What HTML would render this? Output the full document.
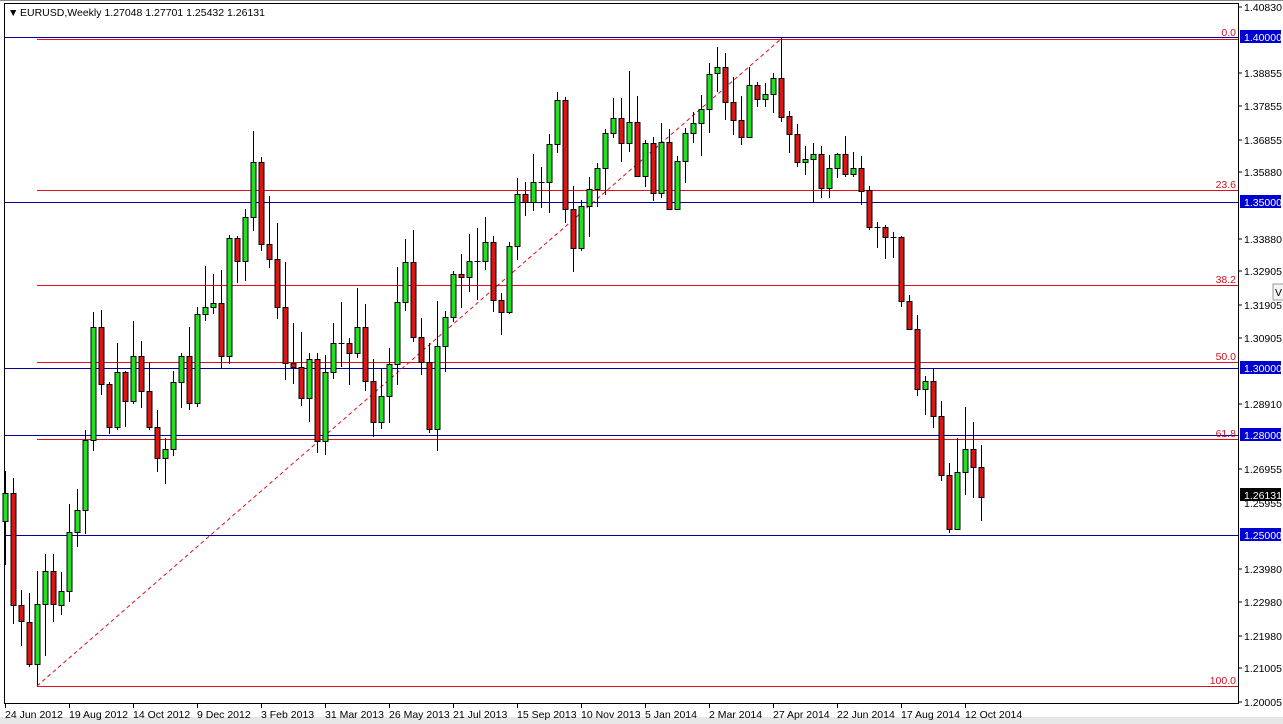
<!DOCTYPE html>
<html><head><meta charset="utf-8"><style>
html,body{margin:0;padding:0;background:#fff;width:1283px;height:724px;overflow:hidden}
svg{display:block}
text{font-family:"Liberation Sans",Tahoma,sans-serif;font-size:10.5px}
</style></head><body>
<svg id="c" width="1283" height="724" viewBox="0 0 1283 724" xmlns="http://www.w3.org/2000/svg" shape-rendering="crispEdges">
<rect x="0" y="0" width="1283" height="724" fill="#fff"/>
<rect x="0" y="717" width="1283" height="7" fill="#e6e6e6"/>
<line x1="0" y1="0.5" x2="1283" y2="0.5" stroke="#888"/>
<line x1="4.5" y1="3" x2="4.5" y2="704" stroke="#000"/>
<line x1="4" y1="3.5" x2="1238" y2="3.5" stroke="#000"/>
<line x1="1238.5" y1="3" x2="1238.5" y2="704" stroke="#000"/>
<line x1="4" y1="703.5" x2="1239" y2="703.5" stroke="#000"/>
<text x="8" y="16" font-size="8">▼</text>
<text x="20" y="16" font-size="11">EURUSD,Weekly  1.27048 1.27701 1.25432 1.26131</text>
<line x1="5" y1="37.5" x2="1238" y2="37.5" stroke="#0000a0"/><line x1="5" y1="202.5" x2="1238" y2="202.5" stroke="#0000a0"/>
<line x1="5" y1="368.5" x2="1238" y2="368.5" stroke="#0000a0"/><line x1="5" y1="435.5" x2="1238" y2="435.5" stroke="#0000a0"/>
<line x1="5" y1="535.5" x2="1238" y2="535.5" stroke="#0000a0"/>
<line x1="37" y1="39.5" x2="1238" y2="39.5" stroke="#e0101a"/><line x1="37" y1="190.5" x2="1238" y2="190.5" stroke="#e0101a"/>
<line x1="37" y1="285.5" x2="1238" y2="285.5" stroke="#e0101a"/><line x1="37" y1="362.5" x2="1238" y2="362.5" stroke="#e0101a"/>
<line x1="37" y1="439.5" x2="1238" y2="439.5" stroke="#e0101a"/><line x1="37" y1="686.5" x2="1238" y2="686.5" stroke="#e0101a"/>
<line x1="37" y1="686" x2="781" y2="39" stroke="#e0101a" stroke-dasharray="4,3" shape-rendering="auto"/>
<g fill="#d01020" text-anchor="end" font-size="9.5">
<text x="1236" y="36">0.0</text><text x="1236" y="188">23.6</text><text x="1236" y="283">38.2</text>
<text x="1236" y="360">50.0</text><text x="1236" y="437">61.8</text><text x="1236" y="684">100.0</text></g>
<g id="candles"></g>
<g stroke="#000"><line x1="1238" y1="7" x2="1242" y2="7"/><line x1="1238" y1="73" x2="1242" y2="73"/><line x1="1238" y1="106" x2="1242" y2="106"/><line x1="1238" y1="140" x2="1242" y2="140"/><line x1="1238" y1="172" x2="1242" y2="172"/><line x1="1238" y1="239" x2="1242" y2="239"/><line x1="1238" y1="271" x2="1242" y2="271"/><line x1="1238" y1="305" x2="1242" y2="305"/><line x1="1238" y1="338" x2="1242" y2="338"/><line x1="1238" y1="404" x2="1242" y2="404"/><line x1="1238" y1="469" x2="1242" y2="469"/><line x1="1238" y1="569" x2="1242" y2="569"/><line x1="1238" y1="602" x2="1242" y2="602"/><line x1="1238" y1="636" x2="1242" y2="636"/><line x1="1238" y1="668" x2="1242" y2="668"/><line x1="1238" y1="702" x2="1242" y2="702"/></g>
<g fill="#000">
<text x="1244" y="11">1.40830</text><text x="1244" y="77">1.38855</text><text x="1244" y="110">1.37855</text>
<text x="1244" y="144">1.36855</text><text x="1244" y="176">1.35880</text><text x="1244" y="243">1.33880</text>
<text x="1244" y="275">1.32905</text><text x="1244" y="309">1.31905</text><text x="1244" y="342">1.30905</text>
<text x="1244" y="408">1.28910</text><text x="1244" y="473">1.26955</text><text x="1244" y="507">1.25955</text>
<text x="1244" y="573">1.23980</text><text x="1244" y="606">1.22980</text><text x="1244" y="640">1.21980</text>
<text x="1244" y="672">1.21005</text><text x="1244" y="706">1.20005</text></g>
<g>
<rect x="1240" y="30" width="41" height="13" fill="#0000d0"/><text x="1244" y="41" fill="#fff">1.40000</text>
<rect x="1240" y="195" width="41" height="13" fill="#0000d0"/><text x="1244" y="206" fill="#fff">1.35000</text>
<rect x="1240" y="361" width="41" height="13" fill="#0000d0"/><text x="1244" y="372" fill="#fff">1.30000</text>
<rect x="1240" y="428" width="41" height="13" fill="#0000d0"/><text x="1244" y="439" fill="#fff">1.28000</text>
<rect x="1240" y="528" width="41" height="13" fill="#0000d0"/><text x="1244" y="539" fill="#fff">1.25000</text>
<rect x="1240" y="488" width="41" height="13" fill="#000"/><text x="1244" y="499" fill="#fff">1.26131</text>
</g>
<rect x="1273" y="284" width="12" height="16" fill="#f4f4f4" stroke="#999"/><text x="1275" y="296" font-size="9">V</text>
<g stroke="#000" id="ticks"></g>
<g fill="#000">
<text x="5" y="718">24 Jun 2012</text><text x="69" y="718">19 Aug 2012</text><text x="133" y="718">14 Oct 2012</text>
<text x="197" y="718">9 Dec 2012</text><text x="261" y="718">3 Feb 2013</text><text x="325" y="718">31 Mar 2013</text>
<text x="389" y="718">26 May 2013</text><text x="453" y="718">21 Jul 2013</text><text x="517" y="718">15 Sep 2013</text>
<text x="581" y="718">10 Nov 2013</text><text x="645" y="718">5 Jan 2014</text><text x="709" y="718">2 Mar 2014</text>
<text x="773" y="718">27 Apr 2014</text><text x="837" y="718">22 Jun 2014</text><text x="901" y="718">17 Aug 2014</text>
<text x="965" y="718">12 Oct 2014</text></g>
</svg>
<script>
var d=[
"G471493521565","R478493605624","R590605621646","R593622664667","G571604664685","G554571604656","R554571604622","G572591605615","G504532591602","G489510532547",
"G430440510534","G312327440451","R310327384395","R382384427434","G343372427430","R371372401427","G321356401404","R341356391408","R362391427430","R410427458472",
"G438449458484","G371382449456","G353356382408","R327356403410","G307314403407","G266307314321","G274303307314","R270303356369","G235238356364","R236238261283",
"G209217261281","G131162217231","R157162244251","R196244259268","R223259307319","R262307363380","R323363367384","R332367398406","G353359398422","R353359441453",
"G355372441455","G323343372379","D302343343367","R338343353385","G288327353358","R304327381391","R359381422437","G368396422429","G348364396423","G267302364385",
"G239262302311","R230262337342","R318337362375","R343362429433","G301346429451","G311317346372","G271274317322","R254274277308","G234261277292","D228261261300",
"G217242261270","R236242300312","R293300312335","G242246312314","G178194246260","R182194202216","G154182202211","D167182182208","G134144182213","G092100144153",
"R097100209223","R186209248272","G200206248251","G177189206237","G163168189207","G129133168195","G098118133138","R098118143162","G071122143152","R096122176177",
"G140143176187","R137143193201","G123142193198","R129142209210","G156161209210","G128133161183","G112123133143","G095109123156","G063074109133","G047067073092",
"R053067102120","R077102120135","R096120137145","G067085137137","R082085099107","G083094099107","G073078094113","R038078117122","R111116134153","R124134162167",
"G146159162175","G143154159203","R146154188198","G155168188198","G153154168178","R136154174177","G152168174177","R156168191205","R186190227230","D222227227248",
"R225227237259","D232237237258","R236237301307","R295301329330","R315329389396","G376381389415","R369381416428","R401416475481","R463475529533","G438472529530",
"G407449472495","R422449467498","R445467497521"];
var g=document.getElementById("candles"),s="";
d.forEach(function(c,k){var t=c[0],h=+c.substr(1,3),a=+c.substr(4,3),b=+c.substr(7,3),l=+c.substr(10,3);var x=5.5+8*k;
s+='<line x1="'+x+'" y1="'+h+'" x2="'+x+'" y2="'+l+'" stroke="#000"/>';
if(t=="D"){s+='<line x1="'+(x-3)+'" y1="'+(a+.5)+'" x2="'+(x+3)+'" y2="'+(a+.5)+'" stroke="#000"/>';}
else{s+='<rect x="'+(x-2.5)+'" y="'+(a+.5)+'" width="5" height="'+Math.max(1,b-a)+'" fill="'+(t=="G"?"#22e022":"#dc1414")+'" stroke="#000"/>';}});
g.innerHTML=s;
var tk="";for(var i=0;i<16;i++){var x=5.5+64*i;tk+='<line x1="'+x+'" y1="703" x2="'+x+'" y2="708"/>';}
document.getElementById("ticks").innerHTML=tk;
</script>
</body></html>
